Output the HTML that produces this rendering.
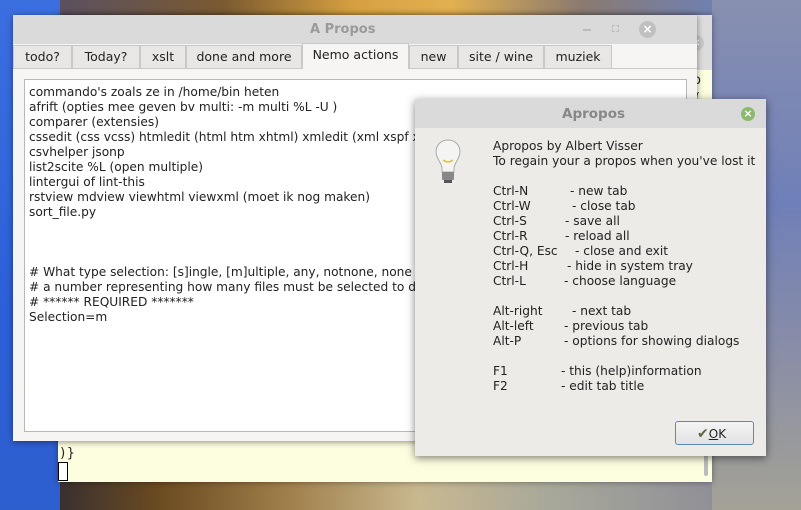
<!DOCTYPE html>
<html><head><style>
*{margin:0;padding:0;box-sizing:border-box}
body{width:801px;height:510px;overflow:hidden;position:relative;font-family:"DejaVu Sans","Liberation Sans",sans-serif;font-size:12.2px;color:#222;
background:radial-gradient(ellipse at 62% 60%,#c9c4b0 0%,#9d9a92 30%,#7b7e94 55%,#5a76c4 80%),#4a6fd0}
.a{position:absolute}
.t{position:absolute;white-space:nowrap;line-height:15px}
</style></head><body>
<div class="a" style="left:0;top:0;width:60px;height:510px;background:linear-gradient(180deg,#3b6fe0,#2d5fd8 60%,#2e5fcf)"></div>
<div class="a" style="left:60px;top:0;width:652px;height:16px;background:linear-gradient(90deg,#5a5060,#7a5a30 25%,#d6a040 45%,#e2b050 60%,#8a7a70 80%,#7080b0)"></div>
<div class="a" style="left:60px;top:482px;width:652px;height:28px;background:linear-gradient(90deg,#3a3030,#6a4a20 15%,#a0804a 35%,#c8b890 55%,#a8a89a 75%,#909098)"></div>
<div class="a" style="left:712px;top:0;width:89px;height:510px;background:linear-gradient(180deg,#8890b0,#6f7fb8 40%,#8a8ea6 70%,#a4a296)"></div>
<!-- back window -->
<div class="a" style="left:58px;top:15px;width:654px;height:467px;background:#dcdcdc;box-shadow:0 0 6px rgba(0,0,0,.4)"></div>
<div class="a" style="left:58px;top:70px;width:654px;height:412px;background:#fdfde0"></div>
<div class="a" style="left:704px;top:440px;width:4px;height:36px;background:#bbb;border-radius:2px"></div>
<div class="t" style="left:662px;top:72px;font-family:'DejaVu Sans Mono',monospace;font-size:13px;line-height:18px">nagio<br>&nbsp;url(</div>
<div class="t" style="left:59px;top:446px;font-family:'DejaVu Sans Mono',monospace;font-size:13px">)}</div>
<div class="a" style="left:58px;top:462px;width:10px;height:19px;border:1px solid #000;background:#fff"></div>
<div class="a" style="left:688px;top:35px;width:16px;height:16px;border-radius:50%;background:#c8c8c8;color:#fff;font-size:11px;text-align:center;line-height:16px;font-weight:bold">×</div>
<!-- main window -->
<div class="a" style="left:13px;top:15px;width:684px;height:426px;background:#f6f5f3;box-shadow:0 1px 6px rgba(0,0,0,.45)"></div>
<div class="a" style="left:13px;top:15px;width:684px;height:29px;background:#dadada"></div>
<div class="t" style="left:310px;top:22px;font-weight:bold;color:#9a9a9a;font-size:13px">A Propos</div>
<div class="a" style="left:583px;top:29px;width:8px;height:2px;background:#bbb"></div>
<div class="a" style="left:612px;top:25px;width:7px;height:7px;border:1px dashed #bbb"></div>
<div class="a" style="left:639px;top:21px;width:17px;height:17px;border-radius:50%;background:#c0c0c0;color:#fff;font-size:12px;text-align:center;line-height:17px;font-weight:bold">×</div>
<div class="a" style="left:13px;top:68px;width:684px;height:1px;background:#c8c8c8"></div>
<div class="a" style="left:13px;top:45px;height:24px;display:flex;font-size:12.5px">
<div style="width:59px;background:#e8e7e5;border:1px solid #c8c8c8;text-align:center;line-height:22px">todo?</div>
<div style="width:68px;background:#e8e7e5;border:1px solid #c8c8c8;text-align:center;line-height:22px">Today?</div>
<div style="width:46px;background:#e8e7e5;border:1px solid #c8c8c8;text-align:center;line-height:22px">xslt</div>
<div style="width:116px;background:#e8e7e5;border:1px solid #c8c8c8;text-align:center;line-height:22px">done and more</div>
<div style="width:107px;background:#f6f5f3;border:1px solid #c8c8c8;border-bottom:none;text-align:center;line-height:22px;margin-top:-2px;height:26px">Nemo actions</div>
<div style="width:49px;background:#e8e7e5;border:1px solid #c8c8c8;text-align:center;line-height:22px">new</div>
<div style="width:86px;background:#e8e7e5;border:1px solid #c8c8c8;text-align:center;line-height:22px">site / wine</div>
<div style="width:68px;background:#e8e7e5;border:1px solid #c8c8c8;text-align:center;line-height:22px">muziek</div>
</div>
<div class="a" style="left:24px;top:79px;width:663px;height:353px;background:#fff;border:1px solid #b8b8b8"></div>
<div class="t" style="left:29px;top:85px">commando's zoals ze in /home/bin heten<br>afrift (opties mee geven bv multi: -m multi %L -U )<br>comparer (extensies)<br>cssedit (css vcss) htmledit (html htm xhtml) xmledit (xml xspf xl<br>csvhelper jsonp<br>list2scite %L (open multiple)<br>lintergui of lint-this<br>rstview mdview viewhtml viewxml (moet ik nog maken)<br>sort_file.py<br><br><br><br># What type selection: [s]ingle, [m]ultiple, any, notnone, none (<br># a number representing how many files must be selected to di<br># ****** REQUIRED *******<br>Selection=m</div>
<!-- dialog -->
<div class="a" style="left:415px;top:99px;width:351px;height:357px;background:#edebe7;box-shadow:0 2px 8px rgba(0,0,0,.5)"></div>
<div class="a" style="left:415px;top:99px;width:351px;height:29px;background:#dadada"></div>
<div class="t" style="left:562px;top:107px;font-weight:bold;color:#888;font-size:13.5px">Apropos</div>
<div class="a" style="left:741px;top:107px;width:14px;height:14px;border-radius:50%;background:#8cb870;color:#fff;font-size:11px;text-align:center;line-height:14px;font-weight:bold">×</div>
<svg class="a" style="left:434px;top:138px" width="28" height="48" viewBox="0 0 28 48">
<path d="M14 2C6 2 2 8 2 14c0 6 5 10 6 16v4h12v-4c1-6 6-10 6-16 0-6-4-12-12-12z" fill="#f4f4f2" stroke="#aaa"/>
<path d="M9 22q5 4 10 0" stroke="#e8c040" fill="none" stroke-width="1.5"/>
<rect x="8" y="34" width="12" height="8" fill="#888" rx="1"/><rect x="10" y="42" width="8" height="3" fill="#555"/>
</svg>
<div class="t" style="left:493px;top:139px">Apropos by Albert Visser<br>To regain your a propos when you've lost it</div>
<div class="t" style="left:493px;top:184px">Ctrl-N<br>Ctrl-W<br>Ctrl-S<br>Ctrl-R<br>Ctrl-Q, Esc<br>Ctrl-H<br>Ctrl-L<br><br>Alt-right<br>Alt-left<br>Alt-P<br><br>F1<br>F2</div>
<div class="t" style="left:570px;top:184px">- new tab</div>
<div class="t" style="left:572px;top:199px">- close tab</div>
<div class="t" style="left:565px;top:214px">- save all</div>
<div class="t" style="left:565px;top:229px">- reload all</div>
<div class="t" style="left:575px;top:244px">- close and exit</div>
<div class="t" style="left:567px;top:259px">- hide in system tray</div>
<div class="t" style="left:564px;top:274px">- choose language</div>
<div class="t" style="left:572px;top:304px">- next tab</div>
<div class="t" style="left:564px;top:319px">- previous tab</div>
<div class="t" style="left:564px;top:334px">- options for showing dialogs</div>
<div class="t" style="left:561px;top:364px">- this (help)information</div>
<div class="t" style="left:561px;top:379px">- edit tab title</div>
<div class="a" style="left:675px;top:421px;width:79px;height:24px;border:1px solid #5a8ab8;border-radius:3px;background:linear-gradient(#f4f4f4,#e2e2e2)"></div>
<div class="t" style="left:697px;top:427px;font-size:12px"><span style="color:#5a6a40;font-size:14px">&#10004;</span><u>O</u>K</div>
</body></html>
